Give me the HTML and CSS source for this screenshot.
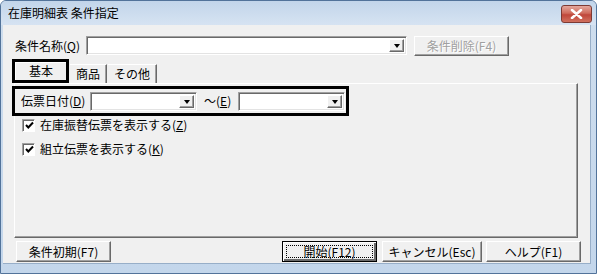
FILE: index.html
```html
<!DOCTYPE html>
<html lang="ja">
<head>
    <meta charset="UTF-8">
    <title>在庫明細表 条件指定</title>
    <link rel="stylesheet" href="styles.css">
</head>
<body>
<div class="window">
    <div class="titlebar">
        <span class="title">在庫明細表 条件指定</span>
        <span class="close-btn">
            <svg width="13" height="10" viewBox="0 0 13 10">
                <path d="M2 1 L11 9 M11 1 L2 9" stroke="#fff" stroke-width="2.6" stroke-linecap="round"/>
            </svg>
        </span>
    </div>
    <div class="client">
        <div class="name-row">
            <span class="name-label">条件名称(<u>Q</u>)</span>
            <div class="combo combo-name"><span class="combo-btn"><i class="arrow"></i></span></div>
            <button class="btn btn-delete" disabled>条件削除(F4)</button>
        </div>

        <div class="tabs">
            <div class="tab-focus"><div class="tab-active">基本</div></div>
            <div class="tab">商品</div>
            <div class="tab">その他</div>
        </div>

        <div class="panel">
            <div class="date-box">
                <span class="date-label">伝票日付(<u>D</u>)</span>
                <div class="combo combo-date"><span class="combo-btn"><i class="arrow"></i></span></div>
                <span class="tilde">～(<u>E</u>)</span>
                <div class="combo combo-date"><span class="combo-btn"><i class="arrow"></i></span></div>
            </div>
            <div class="checks">
                <div class="check-row">
                    <span class="checkbox">
                        <svg width="9" height="9" viewBox="0 0 9 9"><path d="M1 4 L3.3 6.5 L8 1.5" stroke="#000" stroke-width="2" fill="none"/></svg>
                    </span>
                    在庫振替伝票を表示する(<u>Z</u>)
                </div>
                <div class="check-row">
                    <span class="checkbox">
                        <svg width="9" height="9" viewBox="0 0 9 9"><path d="M1 4 L3.3 6.5 L8 1.5" stroke="#000" stroke-width="2" fill="none"/></svg>
                    </span>
                    組立伝票を表示する(<u>K</u>)
                </div>
            </div>
        </div>

        <div class="footer">
            <button class="btn btn-reset">条件初期(F7)</button>
            <div class="footer-right">
                <button class="btn btn-start"><span class="focus-ring">開始(F12)</span></button>
                <button class="btn btn-cancel">キャンセル(Esc)</button>
                <button class="btn btn-help">ヘルプ(F1)</button>
            </div>
        </div>
    </div>
</div>
</body>
</html>
```

FILE: styles.css
```css
body {
    margin: 0;
    font-family: "Noto Sans CJK JP", "Liberation Sans", sans-serif;
    font-size: 12px;
    color: #000;
    background: #fff;
}

.window {
    width: 597px;
    height: 274px;
    box-sizing: border-box;
    display: flex;
    flex-direction: column;
    border: 1px solid #52739a;
    border-radius: 6px 6px 0 0;
    padding: 0 5px 9px 2px;
    background: linear-gradient(#cfdeee, #c3d6eb);
}

.titlebar {
    height: 24px;
    margin: 0 -5px 0 -2px;
    padding-left: 7px;
    display: flex;
    justify-content: space-between;
    align-items: center;
    background: linear-gradient(#c2d5ea, #d6e3f2);
    border-radius: 5px 5px 0 0;
}
.title {
    line-height: 14px;
    margin-top: -1px;
}
.close-btn {
    width: 29px;
    height: 16px;
    margin-right: 4px;
    align-self: flex-start;
    margin-top: 4px;
    display: flex;
    justify-content: center;
    align-items: center;
    border: 1px solid #7d3a33;
    border-radius: 3px;
    background: linear-gradient(#e4a89d, #cf6b5b 45%, #c0473a 55%, #d0705e);
}

.client {
    flex: 1;
    background: #f0f0f0;
    display: flex;
    flex-direction: column;
    border: 1px solid #97aec8;
    border-width: 0 1px 1px 0;
}

/* first row */
.name-row {
    display: flex;
    align-items: center;
    height: 21px;
    margin: 10px 0 0 12px;
}
.name-label {
    width: 71px;
    line-height: 14px;
}

.combo {
    height: 19px;
    box-sizing: border-box;
    background: #fff;
    border: 1px solid;
    border-color: #a0a0a0 #fff #fff #a0a0a0;
    box-shadow: inset 1px 1px #696969, inset -1px -1px #e3e3e3;
    display: flex;
    justify-content: flex-end;
    padding: 2px;
}
.combo-name {
    width: 321px;
}
.combo-date {
    width: 107px;
}
.combo-btn {
    width: 15px;
    box-sizing: border-box;
    background: #f0f0f0;
    border: 1px solid;
    border-color: #fff #696969 #696969 #fff;
    box-shadow: inset -1px -1px #a0a0a0;
    display: flex;
    justify-content: center;
    align-items: center;
}
.arrow {
    width: 0;
    height: 0;
    border-left: 3px solid transparent;
    border-right: 3px solid transparent;
    border-top: 4px solid #000;
    margin-top: 1px;
}

.btn {
    font-family: inherit;
    font-size: 12px;
    line-height: 14px;
    height: 21px;
    box-sizing: border-box;
    padding: 0;
    background: #f0f0f0;
    color: #000;
    border: 1px solid;
    border-color: #fff #696969 #696969 #fff;
    box-shadow: inset -1px -1px #a0a0a0;
}
.btn-delete {
    width: 95px;
    height: 20px;
    margin-left: 7px;
    color: #a0a0a0;
    text-shadow: 1px 1px #fff;
}

/* tabs */
.tabs {
    display: flex;
    align-items: flex-end;
    height: 24px;
    margin: 3px 0 0 9px;
}
.tab-focus {
    width: 57px;
    height: 24px;
    box-sizing: border-box;
    border: 3px solid #000;
}
.tab-active {
    height: 100%;
    box-sizing: border-box;
    border-top: 1px solid #fff;
    border-left: 1px solid #fff;
    text-align: center;
    line-height: 16px;
}
.tab {
    height: 19px;
    box-sizing: border-box;
    padding: 0 6px;
    line-height: 18px;
    border-top: 1px solid #fff;
    border-right: 1px solid #696969;
    box-shadow: inset -1px 0 #a0a0a0;
    margin-left: 1px;
}

.panel {
    width: 564px;
    height: 155px;
    box-sizing: border-box;
    margin-left: 11px;
    border: 1px solid;
    border-color: #fff #696969 #696969 #fff;
    box-shadow: inset -1px -1px #a0a0a0;
    display: flex;
    flex-direction: column;
}

.date-box {
    width: 337px;
    height: 30px;
    box-sizing: border-box;
    margin: 2px 0 0 -3px;
    border: 3px solid #000;
    display: flex;
    align-items: center;
    padding-left: 6px;
}
.date-label {
    width: 69px;
    line-height: 14px;
}
.tilde {
    width: 34px;
    margin-left: 7px;
    line-height: 14px;
}

.checks {
    display: flex;
    flex-direction: column;
    gap: 4px;
    margin-top: -1px;
}
.check-row {
    display: flex;
    align-items: center;
    height: 20px;
    padding-left: 7px;
    line-height: 14px;
}
.checkbox {
    width: 13px;
    height: 13px;
    box-sizing: border-box;
    margin-right: 5px;
    background: #fff;
    border: 1px solid;
    border-color: #a0a0a0 #fff #fff #a0a0a0;
    box-shadow: inset 1px 1px #696969;
    display: flex;
    justify-content: center;
    align-items: center;
    padding: 1px 0 0 1px;
}

/* bottom buttons */
.footer {
    display: flex;
    justify-content: space-between;
    margin-top: 3px;
    padding: 0 9px 0 13px;
}
.footer-right {
    display: flex;
    gap: 4px;
}
.btn-reset,
.btn-start,
.btn-help {
    width: 95px;
}
.btn-cancel {
    width: 100px;
}
.btn-start {
    border: 1px solid #000;
    box-shadow: inset 1px 1px #fff, inset -2px -2px #696969;
    padding: 3px;
    margin-right: 1px;
}
.focus-ring {
    display: block;
    height: 100%;
    box-sizing: border-box;
    border: 1px dotted #000;
    line-height: 12px;
}
```
